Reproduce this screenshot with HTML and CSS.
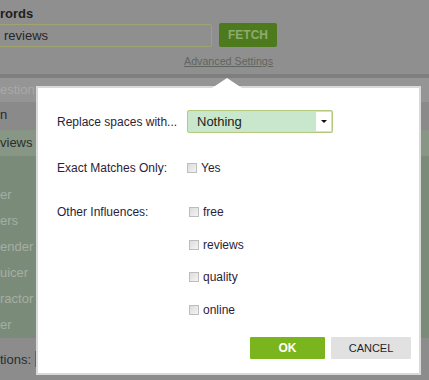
FILE: index.html
```html
<!DOCTYPE html>
<html>
<head>
<meta charset="utf-8">
<link rel="stylesheet" href="styles.css">
</head>
<body>
<div class="page">
  <div class="top">
    <div class="title">rords</div>
    <div class="search">
      <div class="input">reviews</div>
      <div class="fetch">FETCH</div>
    </div>
    <div class="adv"><span class="advlink">Advanced Settings</span></div>
  </div>
  <div class="sep"></div>
  <div class="hdr">estion</div>
  <div class="row">n</div>
  <div class="grow sel">views</div>
  <div class="grow"></div>
  <div class="grow lt">er</div>
  <div class="grow lt">ers</div>
  <div class="grow lt">ender</div>
  <div class="grow lt">uicer</div>
  <div class="grow lt">ractor</div>
  <div class="grow lt">er</div>
  <div class="bottom">tions: <span class="redbar"></span></div>
</div>

<div class="dialog">
  <div class="arrow"></div>
  <div class="line first">
    <div class="label">Replace spaces with...</div>
    <div class="select"><span class="seltext">Nothing</span><span class="drop"><span class="tri"></span></span></div>
  </div>
  <div class="line second">
    <div class="label">Exact Matches Only:</div>
    <div class="opt"><span class="cb"></span><span>Yes</span></div>
  </div>
  <div class="line third">
    <div class="label">Other Influences:</div>
    <div class="opts">
      <div class="opt sub"><span class="cb"></span><span>free</span></div>
      <div class="opt sub"><span class="cb"></span><span>reviews</span></div>
      <div class="opt sub"><span class="cb"></span><span>quality</span></div>
      <div class="opt sub"><span class="cb"></span><span>online</span></div>
    </div>
  </div>
  <div class="buttons">
    <div class="btn ok">OK</div>
    <div class="btn cancel">CANCEL</div>
  </div>
</div>
</body>
</html>
```
FILE: styles.css
```css
html, body {
  margin: 0;
  padding: 0;
  width: 429px;
  height: 380px;
  overflow: hidden;
  background: #8e8e8e;
  font-family: "Liberation Sans", Arial, sans-serif;
}
.page {
  display: flex;
  flex-direction: column;
  height: 380px;
}
.top {
  height: 74px;
  background: #8f8f8f;
  box-sizing: border-box;
  padding-top: 5px;
}
.title {
  font-weight: bold;
  font-size: 13px;
  color: #1e1e1e;
  height: 17px;
  line-height: 17px;
}
.search {
  display: flex;
  align-items: center;
  margin-top: 1px;
  height: 24px;
}
.input {
  margin-left: -10px;
  width: 222px;
  height: 23px;
  box-sizing: border-box;
  border: 1px solid #9fa56c;
  border-radius: 2px;
  padding-left: 13px;
  font-size: 13px;
  line-height: 21px;
  color: #262626;
}
.fetch {
  margin-left: 7px;
  width: 58px;
  height: 24px;
  background: #4e7a1e;
  border-radius: 2px;
  color: #8fab70;
  font-weight: bold;
  font-size: 12px;
  line-height: 24px;
  text-align: center;
}
.adv {
  padding-left: 184px;
  margin-top: 8px;
  font-size: 10.7px;
  line-height: 13px;
}
.advlink {
  color: #5f655f;
  text-decoration: underline;
}
.sep {
  height: 4px;
  background: #7f7f7f;
}
.hdr {
  height: 24px;
  line-height: 24px;
  background: #959595;
  color: #a9a9a9;
  font-size: 13px;
}
.row {
  height: 28px;
  line-height: 26px;
  background: #8a8a8a;
  color: #2a2a2a;
  font-size: 13px;
}
.grow {
  height: 26px;
  line-height: 26px;
  background: #7b8b79;
  color: #2a2f29;
  font-size: 13px;
}
.grow.sel {
  background: #889785;
}
.grow.lt {
  color: #a6aea4;
}
.bottom {
  flex: 1;
  background: #8c8c8c;
  color: #2d2d2d;
  font-size: 13px;
  padding-top: 13px;
  box-sizing: border-box;
}
.redbar {
  display: inline-block;
  width: 2px;
  height: 16px;
  background: #a8404e;
  vertical-align: -3px;
}

/* dialog */
.dialog {
  position: absolute;
  left: 36px;
  top: 86px;
  border: 2px solid #d9d9d9;
  background: #ffffff;
  padding: 22px 8px 14px 19px;
  box-sizing: border-box;
  width: 385px;
  height: 289px;
  display: flex;
  flex-direction: column;
  font-size: 12px;
  color: #2b1d38;
}
.arrow {
  position: absolute;
  left: 174px;
  top: -10px;
  width: 0;
  height: 0;
  border-left: 15px solid transparent;
  border-right: 15px solid transparent;
  border-bottom: 10px solid #ffffff;
}
.line {
  display: flex;
  align-items: center;
}
.label {
  width: 130px;
  flex: none;
}
.first {
  height: 23px;
}
.second {
  height: 20px;
  margin-top: 25px;
}
.third {
  align-items: flex-start;
  margin-top: 24px;
}
.third .label {
  line-height: 20px;
}
.select {
  width: 146px;
  height: 23px;
  box-sizing: border-box;
  border: 1px solid #b5c97c;
  border-radius: 2px;
  background: #c9e7cd;
  display: flex;
  align-items: center;
  justify-content: space-between;
  padding: 1px 1px 1px 9px;
}
.seltext {
  font-size: 13px;
  color: #1b1b1b;
}
.drop {
  width: 15px;
  height: 19px;
  background: #ffffff;
  display: flex;
  align-items: center;
  justify-content: center;
}
.tri {
  width: 0;
  height: 0;
  border-left: 3px solid transparent;
  border-right: 3px solid transparent;
  border-top: 3px solid #111;
}
.opts {
  display: flex;
  flex-direction: column;
  gap: 12.5px;
}
.opt {
  display: flex;
  align-items: center;
  height: 20px;
}
.opt.sub {
  margin-left: 2px;
}
.cb {
  width: 10px;
  height: 10px;
  box-sizing: border-box;
  border: 1px solid #bdbdbd;
  background: linear-gradient(135deg, #dcdcdc, #f4f4f4);
  margin-right: 4px;
  flex: none;
}
.buttons {
  margin-top: auto;
  display: flex;
  justify-content: flex-end;
  gap: 6px;
}
.btn {
  height: 22px;
  line-height: 22px;
  text-align: center;
  font-size: 11px;
  border-radius: 1px;
}
.ok {
  width: 75px;
  background: #7ab51d;
  color: #ffffff;
  font-weight: bold;
  font-size: 12px;
}
.cancel {
  width: 80px;
  background: #e1e1e1;
  color: #1f1f2a;
}
```
